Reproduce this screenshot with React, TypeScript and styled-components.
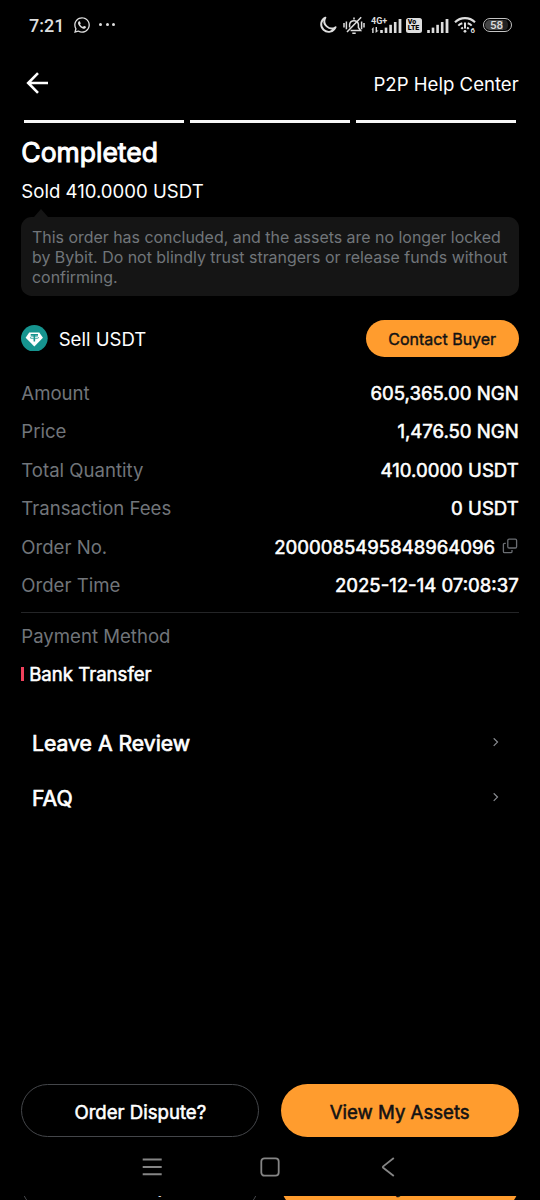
import React from "react";
import styled, { createGlobalStyle } from "styled-components";
import { FaWhatsapp } from "react-icons/fa";

const GlobalStyle = createGlobalStyle`
  * { box-sizing: border-box; }
  body {
    margin: 0;
    background: #000;
    color: #fff;
    font-family: Inter, "Liberation Sans", sans-serif;
    font-size: 18.6px;
  }
  button { font: inherit; cursor: pointer; }
  svg { display: block; flex: none; }
`;

const Screen = styled.div`
  display: flex;
  flex-direction: column;
  width: 540px;
  height: 1200px;
  overflow: hidden;
  background: #000;
`;

/* ---- Status bar ---- */

const StatusBar = styled.header`
  display: flex;
  justify-content: space-between;
  align-items: center;
  height: 50px;
  padding: 0 28px 0 29px;
  color: #dedede;
`;

const StatusGroup = styled.div`
  display: flex;
  align-items: center;
`;

const Clock = styled.span`
  font: 500 18px/22px Roboto, sans-serif;
  margin: 2px 9px 0 0;
`;

const Dots = styled.span`
  display: flex;
  gap: 3.5px;
  margin: 0 0 1px 8px;

  i {
    width: 3px;
    height: 3px;
    border-radius: 50%;
    background: currentColor;
  }
`;

const Network = styled.div`
  display: grid;
  grid-template-columns: 9px 22px;
  grid-template-rows: 8px 7px;
  width: 31px;
  margin-left: 6px;
`;

const NetworkLabel = styled.span`
  grid-area: 1 / 1 / 2 / 3;
  font: 700 9px/7px Roboto, sans-serif;
`;

const NetworkArrows = styled.svg`
  grid-area: 2 / 1;
  margin-top: 1px;
`;

const NetworkBars = styled.div`
  grid-area: 1 / 2 / 3 / 3;
`;

const Volte = styled.span`
  display: flex;
  flex-direction: column;
  width: 16px;
  height: 15px;
  margin: 0 5px 0 4px;
  border-radius: 2.5px;
  background: #dedede;
  color: #000;
  font: 900 7px/6px Roboto, sans-serif;
  padding: 1.5px 0 0 1.8px;
`;

const Battery = styled.span`
  display: flex;
  align-items: center;
  justify-content: center;
  width: 29px;
  height: 14px;
  margin-left: 7px;
  padding: 1px 3px 1px 1px;
  border: 1.4px solid #c4c4c4;
  border-radius: 7px;
  background: linear-gradient(90deg, #444 0 80%, #222 80% 100%) content-box;
  font: 500 11.5px/13px Roboto, sans-serif;
`;

/* ---- Page header ---- */

const TopBar = styled.nav`
  display: flex;
  align-items: center;
  justify-content: space-between;
  height: 68px;
  padding: 0 21.3px 0 26px;

  svg { margin-bottom: 1.6px; }
`;

const Steps = styled.div`
  display: grid;
  grid-template-columns: repeat(3, 1fr);
  gap: 6px;
  margin: 2px 24px 0;
`;

const Step = styled.i`
  height: 3px;
  background: #f7f7f7;
`;

const Content = styled.main`
  flex: 1;
  padding: 0 21.3px;
`;

const Strong = styled.span<{ $size?: number; $stroke?: number }>`
  font-size: ${(p) => p.$size ?? 18.6}px;
  -webkit-text-stroke: ${(p) => p.$stroke ?? 0.55}px currentColor;
`;

const Title = styled.h1`
  margin: 11px 0 0;
  font-size: 26.5px;
  font-weight: 400;
  line-height: 36px;
  -webkit-text-stroke: 1px #fff;
`;

const Subtitle = styled.p`
  margin: 9px 0 0;
  line-height: 24px;
`;

const Notice = styled.p`
  position: relative;
  height: 78.4px;
  margin: 14.2px 0 0;
  padding: 10.8px 0 0 10.7px;
  border-radius: 10.7px;
  background: #151515;
  color: #71757a;
  font-size: 15.93px;
  line-height: 20px;
  white-space: nowrap;

  &::before {
    content: "";
    position: absolute;
    left: 13px;
    top: -8px;
    border: solid transparent;
    border-width: 0 7px 8px;
    border-bottom-color: #151515;
  }
`;

/* ---- Order details ---- */

const AssetRow = styled.div`
  display: flex;
  align-items: center;
  gap: 10.7px;
  height: 37px;
  margin-top: 24px;
`;

const AssetName = styled.span`
  padding-top: 2px;
`;

const ContactButton = styled.button`
  width: 153px;
  height: 37px;
  margin-left: auto;
  padding: 0;
  border: 0;
  border-radius: 19px;
  background: #ff9c2e;
  color: #121214;
`;

const Details = styled.dl`
  margin: 17px 0 0;
`;

const DetailRow = styled.div`
  display: flex;
  align-items: center;
  justify-content: space-between;
  height: 38.5px;
`;

const Label = styled.dt`
  color: #71757a;
`;

const Value = styled.dd`
  display: flex;
  align-items: center;
  gap: 7px;
  margin: 0;

  svg { margin: 0 0.7px 2px 0; }
`;

const Divider = styled.hr`
  height: 1px;
  margin: 7.3px 0 3.5px;
  border: 0;
  background: #242527;
`;

const PaymentMark = styled.i`
  width: 2.4px;
  height: 14px;
  margin-right: 5.5px;
  background: #f0415c;
`;

const PaymentRow = styled.div`
  display: flex;
  align-items: center;
  height: 38.5px;
`;

const Links = styled.div`
  margin-top: 21.3px;
  padding: 0 19px 0 10.7px;
`;

const LinkRow = styled.div`
  display: flex;
  align-items: center;
  justify-content: space-between;
  height: 55.8px;
`;

/* ---- Bottom area ---- */

const Actions = styled.div`
  display: grid;
  grid-template-columns: 1fr 1fr;
  gap: 21.3px;
  flex: none;
  padding: 0 21.3px;
`;

const ActionButton = styled.button<{ $primary?: boolean }>`
  height: 53.3px;
  padding: 2px 0 0;
  border: ${(p) => (p.$primary ? "0" : "1.3px solid #44464a")};
  border-radius: 27px;
  background: ${(p) => (p.$primary ? "#ff9c2e" : "transparent")};
  color: ${(p) => (p.$primary ? "#121214" : "#fff")};
`;

const SystemNav = styled.footer`
  display: grid;
  grid-template-columns: 20px 20px 20px;
  justify-content: center;
  align-items: center;
  gap: 98px;
  height: 58.7px;
  color: #858585;
`;

const BottomSliver = styled.div`
  display: flex;
  flex-direction: column;
  justify-content: flex-start;
  height: 4px;
  overflow: hidden;

  > div { margin-top: -38px; }
`;

const SignalBars = () => (
  <svg width="22" height="15" viewBox="0 0 22 15" fill="currentColor">
    <rect x="0.2" y="12" width="2.6" height="3" />
    <rect x="4.7" y="9.6" width="2.6" height="5.4" />
    <rect x="9.3" y="6.8" width="2.6" height="8.2" />
    <rect x="13.9" y="4" width="2.6" height="11" />
    <rect x="18.6" y="1" width="2.8" height="14" />
  </svg>
);

const MoonIcon = () => (
  <svg width="18" height="18" viewBox="0 0 18 18" fill="none" stroke="currentColor" strokeWidth="1.9" strokeLinejoin="round">
    <path d="M6.4 1.6A7.5 7.5 0 1 0 16.6 11.2 7.2 7.2 0 0 1 6.4 1.6Z" />
  </svg>
);

const MutedBellIcon = () => (
  <svg width="22" height="19" viewBox="0 0 22 19" fill="none" stroke="currentColor" strokeWidth="1.5">
    <path d="M6.6 11.5V8.2a4.5 4.5 0 0 1 8.8 0v3.3l2.2 3H7.6" />
    <path d="M9.3 17.3h3.4M11 1.4v2.2M18.2 1.2 4 16M1 7v4.6M3.4 5.4v7.8M21 7v4.6M18.6 5.4v7.8" />
  </svg>
);

const WifiIcon = () => (
  <svg width="22" height="18" viewBox="0 0 22 18" fill="none" stroke="currentColor">
    <path d="M1 6.2a14.2 14.2 0 0 1 20 0" strokeWidth="2.1" />
    <path d="M4.3 9.6a9.8 9.8 0 0 1 4-2.4M13.7 7.2a9.8 9.8 0 0 1 4 2.4" strokeWidth="2" />
    <path d="M7.3 12.8q.7-.8 1.7-1.2M13 11.6q1 .4 1.7 1.2" strokeWidth="2" />
    <path d="M11 6.4v6" strokeWidth="2" />
    <circle cx="11" cy="15.3" r="1.4" fill="currentColor" stroke="none" />
    <text x="16.6" y="17" fontFamily="Roboto, sans-serif" fontSize="7.8" fontWeight="700" fill="currentColor" stroke="none">6</text>
  </svg>
);

const BackIcon = () => (
  <svg width="24" height="24" viewBox="0 0 24 24" fill="none" stroke="#fff" strokeWidth="2.6">
    <path d="M22 12H2.5M12 2.2 2.2 12l9.8 9.8" />
  </svg>
);

const TetherIcon = () => (
  <svg width="26.7" height="26.7" viewBox="0 0 27 27">
    <circle cx="13.5" cy="13.5" r="13.5" fill="#16948f" />
    <path d="M8.3 7.5h10.2l3.7 5.5-8.7 8.7L4.7 13z" fill="#fff" />
    <path d="M9.8 10h7.4M13.5 10v6.6" stroke="#16948f" strokeWidth="1.6" />
    <ellipse cx="13.5" cy="12.8" rx="4.4" ry="1.1" fill="none" stroke="#16948f" strokeWidth="0.7" />
  </svg>
);

const CopyIcon = () => (
  <svg width="16" height="16" viewBox="0 0 16 16" fill="none" stroke="#6b6e73" strokeWidth="1.3">
    <rect x="5.8" y="1.2" width="8.8" height="8.8" rx="1.3" />
    <path d="M3.8 5.4H2.6c-.7 0-1.2.5-1.2 1.2v6.8c0 .7.5 1.2 1.2 1.2h6.2c.7 0 1.2-.5 1.2-1.2V12" />
  </svg>
);

const Chevron = () => (
  <svg width="8" height="10" viewBox="0 0 8 10" fill="none" stroke="#8a8d92" strokeWidth="1.2">
    <path d="M1.7 0.3 5.5 4.1 1.7 7.9" />
  </svg>
);

const Spacer = styled.span<{ $w: number }>`
  width: ${(p) => p.$w}px;
`;

const details: { label: string; value: string; copy?: boolean }[] = [
  { label: "Amount", value: "605,365.00 NGN" },
  { label: "Price", value: "1,476.50 NGN" },
  { label: "Total Quantity", value: "410.0000 USDT" },
  { label: "Transaction Fees", value: "0 USDT" },
  { label: "Order No.", value: "2000085495848964096", copy: true },
  { label: "Order Time", value: "2025-12-14 07:08:37" },
];

const OrderActions = () => (
  <Actions>
    <ActionButton><Strong>Order Dispute?</Strong></ActionButton>
    <ActionButton $primary><Strong>View My Assets</Strong></ActionButton>
  </Actions>
);

export default function App() {
  return (
    <Screen>
      <GlobalStyle />
      <StatusBar>
        <StatusGroup>
          <Clock>7:21</Clock>
          <FaWhatsapp size={18} />
          <Dots><i /><i /><i /></Dots>
        </StatusGroup>
        <StatusGroup>
          <MoonIcon />
          <Spacer $w={6} />
          <MutedBellIcon />
          <Network>
            <NetworkLabel>4G+</NetworkLabel>
            <NetworkArrows width="9" height="6" viewBox="0 0 9 6" fill="currentColor">
              <path d="M0.4 2.6 2.6 0v6H1.2V2.6zM4.6 0H6v3.4h1.6L4.6 6z" />
            </NetworkArrows>
            <NetworkBars><SignalBars /></NetworkBars>
          </Network>
          <Volte><span>Vo</span><span>LTE</span></Volte>
          <SignalBars />
          <Spacer $w={5} />
          <WifiIcon />
          <Battery>58</Battery>
        </StatusGroup>
      </StatusBar>

      <TopBar>
        <BackIcon />
        <span>P2P Help Center</span>
      </TopBar>
      <Steps><Step /><Step /><Step /></Steps>

      <Content>
        <Title>Completed</Title>
        <Subtitle>Sold 410.0000 USDT</Subtitle>
        <Notice>
          This order has concluded, and the assets are no longer locked<br />
          by Bybit. Do not blindly trust strangers or release funds without<br />
          confirming.
        </Notice>

        <AssetRow>
          <TetherIcon />
          <AssetName>Sell USDT</AssetName>
          <ContactButton><Strong $size={16} $stroke={0.4}>Contact Buyer</Strong></ContactButton>
        </AssetRow>

        <Details>
          {details.map((d) => (
            <DetailRow key={d.label}>
              <Label>{d.label}</Label>
              <Value>
                <Strong>{d.value}</Strong>
                {d.copy && <CopyIcon />}
              </Value>
            </DetailRow>
          ))}
        </Details>
        <Divider />
        <DetailRow><Label as="span">Payment Method</Label></DetailRow>
        <PaymentRow>
          <PaymentMark />
          <Strong>Bank Transfer</Strong>
        </PaymentRow>

        <Links>
          {["Leave A Review", "FAQ"].map((t) => (
            <LinkRow key={t}>
              <Strong $size={21.2} $stroke={0.7}>{t}</Strong>
              <Chevron />
            </LinkRow>
          ))}
        </Links>
      </Content>

      <OrderActions />
      <SystemNav>
        <svg width="20" height="20" viewBox="0 0 20 20" stroke="currentColor" strokeWidth="2">
          <path d="M0.7 2.5h19M0.7 10h19M0.7 17.3h19" />
        </svg>
        <svg width="20" height="20" viewBox="0 0 20 20" fill="none" stroke="currentColor" strokeWidth="1.8">
          <rect x="1.3" y="1.3" width="17.4" height="17.4" rx="3.2" />
        </svg>
        <svg width="20" height="20" viewBox="0 0 20 20" fill="none" stroke="currentColor" strokeWidth="1.8">
          <path d="M15.8 1 5.2 9.4q-.8.7 0 1.4L15.8 19" />
        </svg>
      </SystemNav>
      <BottomSliver aria-hidden="true"><OrderActions /></BottomSliver>
    </Screen>
  );
}
